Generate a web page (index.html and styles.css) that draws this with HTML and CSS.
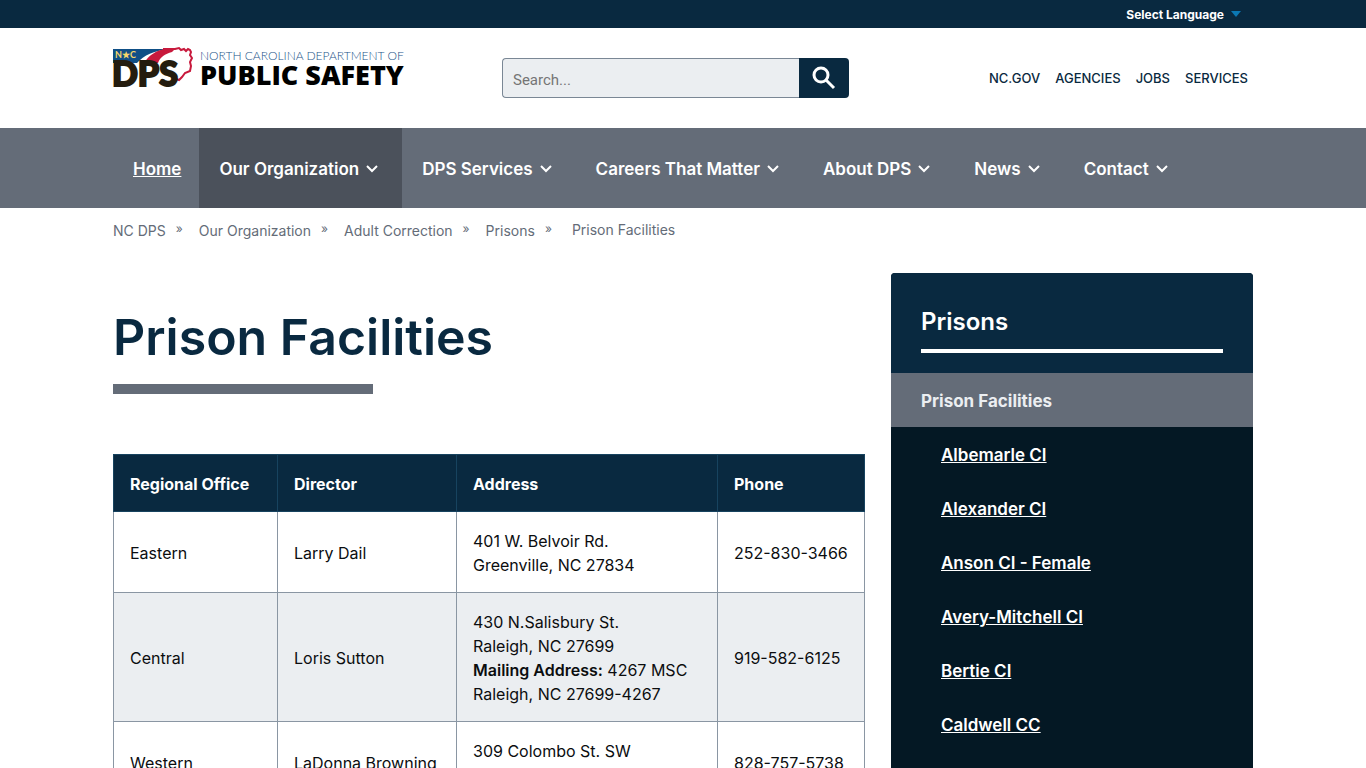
FILE: index.html
```html
<!DOCTYPE html>
<html lang="en">
<head>
    <meta charset="UTF-8">
    <meta name="viewport" content="width=device-width, initial-scale=1.0">
    <title>NC DPS: Prison Facilities</title>
    <link rel="stylesheet" href="styles.css">
</head>
<body>
    <svg class="defs" aria-hidden="true">
        <symbol id="chevron" viewBox="0 0 12 8">
            <path d="M1 1l5 5 5-5" fill="none" stroke="currentColor" stroke-width="2"/>
        </symbol>
    </svg>
    <div class="topbar">
        <div class="container topbar-inner">
            <button class="language" type="button">Select Language <span class="arrow"></span></button>
        </div>
    </div>
    <header class="container header">
        <a class="logo" href="#">
            <svg width="300" height="46" viewBox="0 0 300 46" role="img" aria-label="North Carolina Department of Public Safety">
                <path d="M0 1h55c-14 2-24 6-31 14H0z" fill="#0f4f86"/>
                <path d="M31 15C36 7 44 2 52 1h10l-3 3c-7 2-12 5-14 11z" fill="#c8193c"/>
                <path d="M50 1h12l4-1 2 2 3-1 2 2 2-2 2 1 1 2-1 3 2 3-2 4 1 4-1 5-5 2-3 4-3 3-3-1" fill="none" stroke="#c8193c" stroke-width="2"/>
                <text class="logo-nc" x="2" y="10">N★C</text>
                <text class="logo-dps" x="-1" y="38">DPS</text>
                <text class="logo-top" x="87" y="12">NORTH CAROLINA DEPARTMENT OF</text>
                <text class="logo-bottom" x="87" y="37">PUBLIC SAFETY</text>
            </svg>
        </a>
        <form class="search">
            <input type="text" placeholder="Search..." aria-label="Search">
            <button type="submit" aria-label="Search">
                <svg width="24" height="24" viewBox="0 0 24 24" fill="none" stroke="#fff" stroke-width="3">
                    <circle cx="9" cy="9" r="7"/>
                    <path d="M14 14l8 8"/>
                </svg>
            </button>
        </form>
        <div class="links">
            <a href="#">NC.GOV</a>
            <a href="#">AGENCIES</a>
            <a href="#">JOBS</a>
            <a href="#">SERVICES</a>
        </div>
    </header>
    <nav class="nav">
        <div class="container nav-inner">
            <a class="home" href="#">Home</a>
            <a class="drop active" href="#">Our Organization <svg class="chevron"><use href="#chevron"/></svg></a>
            <a class="drop" href="#">DPS Services <svg class="chevron"><use href="#chevron"/></svg></a>
            <a class="drop" href="#">Careers That Matter <svg class="chevron"><use href="#chevron"/></svg></a>
            <a class="drop" href="#">About DPS <svg class="chevron"><use href="#chevron"/></svg></a>
            <a class="drop" href="#">News <svg class="chevron"><use href="#chevron"/></svg></a>
            <a class="drop" href="#">Contact <svg class="chevron"><use href="#chevron"/></svg></a>
        </div>
    </nav>
    <div class="container breadcrumb">
        <a href="#">NC DPS</a><span class="sep">»</span>
        <a href="#">Our Organization</a><span class="sep">»</span>
        <a href="#">Adult Correction</a><span class="sep">»</span>
        <a href="#">Prisons</a><span class="sep">»</span>
        <span class="current">Prison Facilities</span>
    </div>
    <div class="container content">
        <main class="main">
            <h1>Prison Facilities</h1>
            <table>
                <thead>
                    <tr>
                        <th class="col-office">Regional Office</th>
                        <th class="col-director">Director</th>
                        <th class="col-address">Address</th>
                        <th class="phone">Phone</th>
                    </tr>
                </thead>
                <tbody>
                    <tr>
                        <td>Eastern</td>
                        <td>Larry Dail</td>
                        <td>401 W. Belvoir Rd.<br>Greenville, NC 27834</td>
                        <td class="phone">252-830-3466</td>
                    </tr>
                    <tr>
                        <td>Central</td>
                        <td>Loris Sutton</td>
                        <td>430 N.Salisbury St.<br>Raleigh, NC 27699<br><b>Mailing Address:</b> 4267 MSC<br>Raleigh, NC 27699-4267</td>
                        <td class="phone">919-582-6125</td>
                    </tr>
                    <tr>
                        <td>Western</td>
                        <td>LaDonna Browning</td>
                        <td>309 Colombo St. SW<br>Valdese, NC 28690</td>
                        <td class="phone">828-757-5738</td>
                    </tr>
                </tbody>
            </table>
        </main>
        <aside class="sidebar">
            <div class="sidebar-head">
                <h2>Prisons</h2>
            </div>
            <a class="selected" href="#">Prison Facilities</a>
            <ul>
                <li><a href="#">Albemarle CI</a></li>
                <li><a href="#">Alexander CI</a></li>
                <li><a href="#">Anson CI - Female</a></li>
                <li><a href="#">Avery-Mitchell CI</a></li>
                <li><a href="#">Bertie CI</a></li>
                <li><a href="#">Caldwell CC</a></li>
                <li><a href="#">Caswell CC</a></li>
            </ul>
        </aside>
    </div>
</body>
</html>
```
FILE: styles.css
```css
*{
    box-sizing: border-box;
}
body{
    margin: 0;
    font-family: Inter, "Noto Sans", sans-serif;
    font-size: 16px;
    line-height: 24px;
    color: #0b0d0f;
    background: #fff;
}
a{
    color: inherit;
    text-decoration: none;
}
.defs{
    display: none;
}
.container{
    max-width: 1140px;
    margin: 0 auto;
}
.topbar{
    background: #092940;
}
.topbar-inner{
    display: flex;
    justify-content: flex-end;
    height: 28px;
    padding-right: 12px;
}
.language{
    display: flex;
    align-items: center;
    gap: 7px;
    padding: 0;
    border: 0;
    background: none;
    color: #fff;
    font: bold 12px Inter, sans-serif;
    cursor: pointer;
}
.arrow{
    border: 5px solid transparent;
    border-top: 6px solid #0b78b4;
    border-bottom: 0;
}
.header{
    display: flex;
    align-items: center;
    height: 100px;
    padding-right: 5px;
}
.logo{
    width: 290px;
    height: 60px;
}
.logo svg{
    overflow: visible;
}
.logo text{
    font-family: Lato, sans-serif;
}
.logo .logo-nc{
    font-size: 9px;
    font-weight: bold;
    fill: #f5d76a;
}
.logo .logo-dps{
    font-size: 34px;
    font-weight: 900;
    fill: #241c0e;
    stroke: #241c0e;
    stroke-width: 2px;
}
.logo .logo-top{
    font-size: 12px;
    font-weight: 300;
    fill: #1d5489;
}
.logo .logo-bottom{
    font-family: "Open Sans", sans-serif;
    font-size: 27px;
    font-weight: 800;
    fill: #000;
}
.search{
    display: flex;
    width: 347px;
    height: 40px;
    margin-left: 99px;
}
.search input{
    flex: 1;
    min-width: 0;
    padding: 3px 10px 0;
    border: 1px solid #7a8795;
    border-right: 0;
    border-radius: 4px 0 0 4px;
    background: #ebeef1;
    font: 15px Roboto, sans-serif;
}
.search input::placeholder{
    color: #757575;
}
.search button{
    display: flex;
    align-items: center;
    justify-content: center;
    width: 50px;
    padding: 0;
    border: 0;
    border-radius: 0 4px 4px 0;
    background: #092940;
    cursor: pointer;
}
.links{
    display: flex;
    gap: 15px;
    margin-left: auto;
    font-size: 13px;
    font-weight: 500;
    color: #092940;
}
.nav{
    background: #646c78;
    color: #fff;
    font-size: 17px;
    font-weight: 600;
}
.nav-inner{
    display: flex;
}
.nav a{
    display: flex;
    align-items: center;
    height: 80px;
    padding: 2px 20px 0;
}
.nav a.drop{
    padding-right: 24px;
}
.nav a.active{
    background: #4b515b;
}
.nav .home{
    padding-right: 18px;
    text-decoration: underline;
}
.chevron{
    width: 12px;
    height: 8px;
    margin-left: 7px;
}
.breadcrumb{
    display: flex;
    padding-top: 11px;
    font-size: 14px;
    color: #646c78;
}
.sep{
    width: 33px;
    padding-left: 10px;
    font-size: 12px;
    line-height: 20px;
}
.current{
    padding-left: 4px;
    line-height: 22px;
}
.content{
    display: flex;
    gap: 26px;
    align-items: flex-start;
    padding-top: 30px;
}
.main{
    flex: 1;
}
h1{
    margin: 32px 0 60px;
    font-size: 50px;
    line-height: 64px;
    font-weight: 600;
    color: #092940;
}
h1::after{
    content: "";
    display: block;
    width: 260px;
    height: 10px;
    margin-top: 15px;
    background: #646c78;
}
table{
    width: 100%;
    border-collapse: collapse;
    table-layout: fixed;
}
th, td{
    padding: 17px 16px 15px;
    border: 1px solid #8a96a3;
    text-align: left;
}
th{
    border-color: #17435f;
    background: #092940;
    color: #fff;
    font-weight: 700;
}
tbody tr:nth-child(even){
    background: #ebeef1;
}
td b{
    font-weight: 600;
}
.phone{
    white-space: nowrap;
}
.col-office{
    width: 164px;
}
.col-director{
    width: 179px;
}
.col-address{
    width: 261px;
}
.sidebar{
    width: 362px;
    border-radius: 4px;
    overflow: hidden;
    background: #041824;
    color: #fff;
    font-size: 17px;
    font-weight: 600;
}
.sidebar-head{
    padding: 31px 30px 20px;
    background: #092940;
}
.sidebar h2{
    margin: 0;
    padding-bottom: 9px;
    border-bottom: 4px solid #fff;
    font-size: 24px;
    line-height: 36px;
    font-weight: 600;
}
.selected{
    display: block;
    padding: 16px 30px 14px;
    background: #646c78;
    color: #ebeef1;
    font-weight: 700;
}
.sidebar ul{
    margin: 0;
    padding: 0;
    list-style: none;
}
.sidebar li{
    padding: 16px 50px 14px;
}
.sidebar li a{
    text-decoration: underline;
}
```
